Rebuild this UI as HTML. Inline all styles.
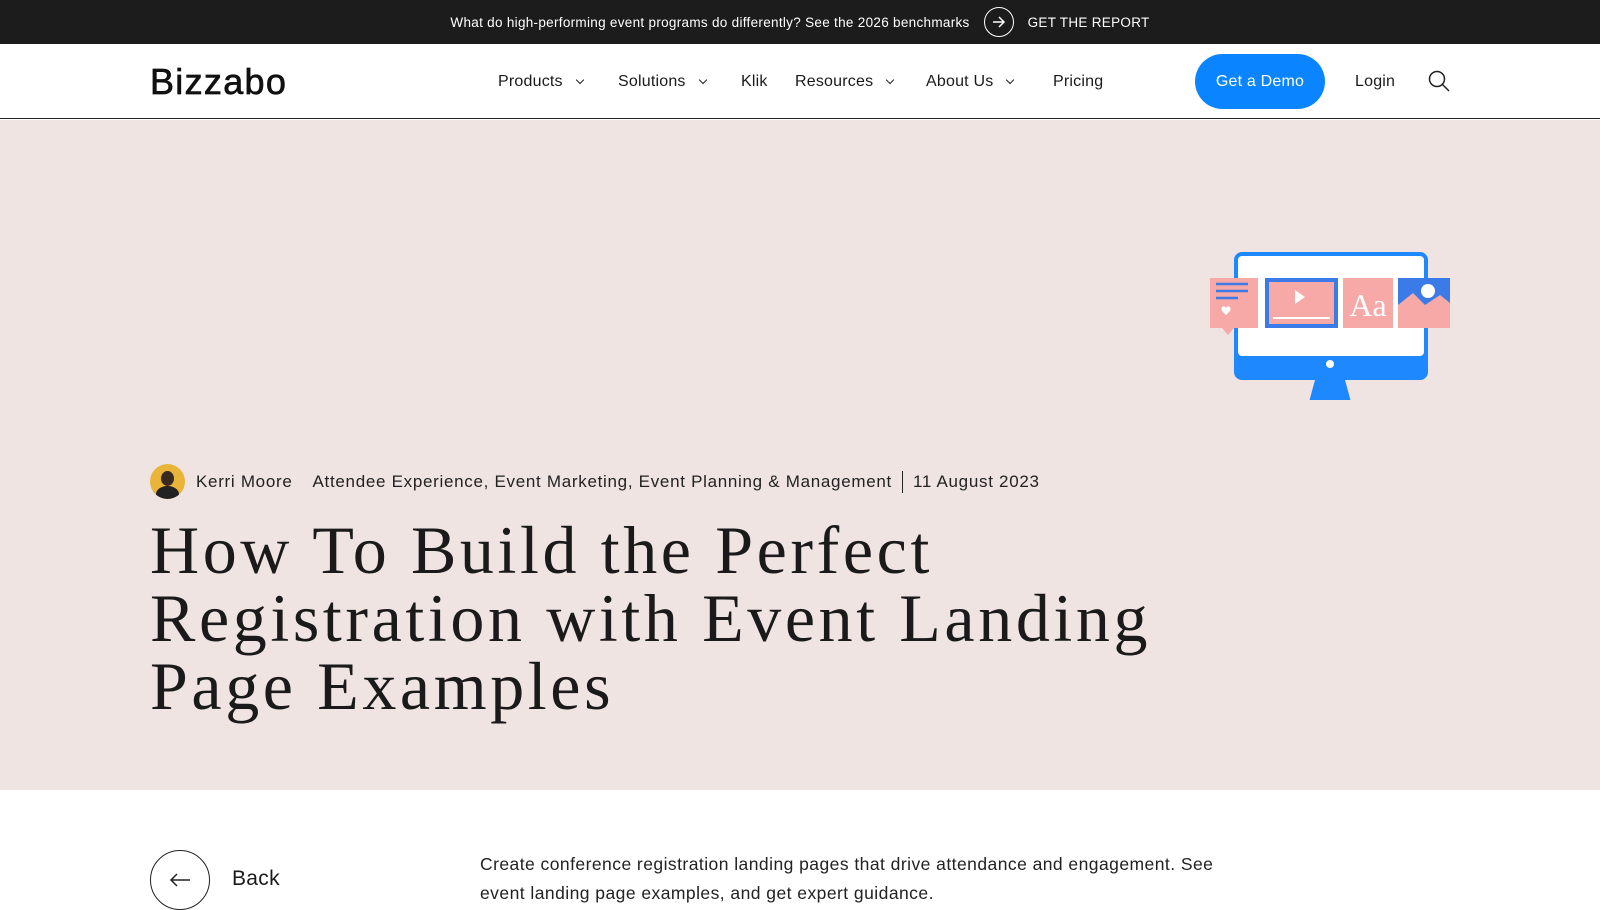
<!DOCTYPE html>
<html><head><meta charset="utf-8"><style>
*{margin:0;padding:0;box-sizing:border-box}
body{width:1600px;height:900px;overflow:hidden;font-family:"Liberation Sans",sans-serif;background:#fff;color:#1a1a1a}
.top{height:44px;background:#1c1c1c;color:#fff;font-size:13.5px;letter-spacing:0.3px;display:flex;align-items:center;justify-content:center;gap:14px}
.top .c{width:30px;height:30px;border:1.5px solid #fff;border-radius:50%;display:flex;align-items:center;justify-content:center}
.nav{height:75px;border-bottom:1px solid #222;position:relative;font-size:16px;letter-spacing:0.2px}
.nav .logo{position:absolute;left:150px;top:17px;font-size:36px;letter-spacing:1.3px;color:#111;-webkit-text-stroke:0.7px #111}
.nav .i{position:absolute;top:29px}
.nav .chev{display:inline-block;width:6px;height:6px;border-right:1.5px solid #222;border-bottom:1.5px solid #222;transform:rotate(45deg);margin-left:14px;position:relative;top:-3px}
.demo{position:absolute;left:1195px;top:10px;width:130px;height:55px;border-radius:28px;background:#0a84ff;color:#fff;display:flex;align-items:center;justify-content:center;font-size:16px}
.hero{position:absolute;top:120px;left:0;width:1600px;height:670px;background:#efe4e2}
.meta{position:absolute;left:150px;top:344px;display:flex;align-items:center;font-size:17px;letter-spacing:0.7px;color:#222}
.av{width:35px;height:35px;border-radius:50%;background:#e9b43a;margin-right:11px;position:relative;overflow:hidden}
.av:after{content:"";position:absolute;left:11px;top:7px;width:13px;height:15px;border-radius:50%;background:#3a2a20}
.av:before{content:"";position:absolute;left:6px;top:22px;width:23px;height:16px;border-radius:50%;background:#222}
h1{position:absolute;left:150px;top:396px;font-family:"Liberation Serif",serif;font-weight:400;font-size:68px;line-height:68px;color:#1a1a1a;letter-spacing:3.6px}
.back{position:absolute;left:150px;top:850px;width:60px;height:60px;border:1.5px solid #222;border-radius:50%}
</style></head><body>
<div class="top"><span>What do high-performing event programs do differently? See the 2026 benchmarks</span><span class="c"><svg width="14" height="12" viewBox="0 0 14 12"><path d="M1 6H12M7 1l5 5-5 5" stroke="#fff" stroke-width="1.5" fill="none"/></svg></span><span>GET THE REPORT</span></div>
<div class="nav">
<div class="logo">Bizzabo</div>
<span class="i" style="left:498px">Products<span class="chev"></span></span>
<span class="i" style="left:618px">Solutions<span class="chev"></span></span>
<span class="i" style="left:741px">Klik</span>
<span class="i" style="left:795px">Resources<span class="chev"></span></span>
<span class="i" style="left:926px">About Us<span class="chev"></span></span>
<span class="i" style="left:1053px">Pricing</span>
<div class="demo">Get a Demo</div>
<span class="i" style="left:1355px">Login</span>
<svg class="i" style="left:1428px;top:26px" width="22" height="22" viewBox="0 0 22 22"><circle cx="9" cy="9" r="7.5" stroke="#222" stroke-width="1.5" fill="none"/><path d="M14.5 14.5L21 21" stroke="#222" stroke-width="1.5"/></svg>
</div>
<div class="hero">
<svg style="position:absolute;left:1210px;top:130px" width="240" height="150" viewBox="0 0 240 150">
<rect x="24" y="2" width="194" height="128" rx="8" fill="#1e88ff"/>
<rect x="28" y="6" width="186" height="100" rx="4" fill="#fff"/>
<circle cx="120" cy="114" r="4" fill="#fff"/>
<path d="M105 130h30l6 22h-42z" fill="#1e88ff"/>
<path d="M60 151h115" stroke="#555" stroke-width="1"/>
<rect x="0" y="28" width="48" height="50" fill="#f6a9a6"/>
<path d="M12 78l6 7 6-7z" fill="#f6a9a6"/>
<path d="M6 34h32M6 41h32M6 48h22" stroke="#3a7be8" stroke-width="2.5"/>
<path d="M13 62c-4-4 1-8 3-4 2-4 7 0 3 4l-3 3z" fill="#fff"/>
<rect x="55" y="28" width="73" height="50" fill="#3a7be8"/><rect x="59" y="32" width="65" height="42" fill="#f6a9a6"/>
<path d="M85 40l10 7-10 7z" fill="#fff"/><path d="M63 68h57" stroke="#fff" stroke-width="2"/>
<rect x="133" y="28" width="50" height="50" fill="#f6a9a6"/>
<text x="158" y="66" font-family="Liberation Serif" font-size="32" fill="#fff" text-anchor="middle">Aa</text>
<rect x="188" y="28" width="52" height="50" fill="#f6a9a6"/>
<path d="M188 28h52v25l-10-8-15 10-12-12-15 12z" fill="#3a7be8"/><circle cx="218" cy="41" r="7" fill="#fff"/>
</svg>
<div class="meta"><div class="av"></div><span>Kerri Moore</span><span style="margin-left:20px">Attendee Experience, Event Marketing, Event Planning &amp; Management</span><span style="border-left:1.5px solid #222;height:22px;margin:0 10px"></span><span>11 August 2023</span></div>
<h1>How To Build the Perfect<br>Registration with Event Landing<br>Page Examples</h1>
</div>
<div class="back"><svg style="position:absolute;left:18px;top:22px" width="22" height="14" viewBox="0 0 22 14"><path d="M21 7H2M8 1L2 7l6 6" stroke="#222" stroke-width="1.5" fill="none"/></svg></div>
<span style="position:absolute;left:232px;top:867px;font-size:21px;letter-spacing:0.3px">Back</span>
<div style="position:absolute;left:480px;top:850px;width:760px;font-size:17.5px;line-height:29px;letter-spacing:0.45px;color:#222">Create conference registration landing pages that drive attendance and engagement. See event landing page examples, and get expert guidance.</div>
</body></html>
